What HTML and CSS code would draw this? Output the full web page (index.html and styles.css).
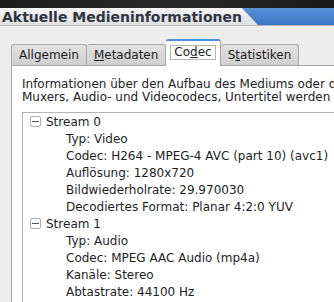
FILE: index.html
```html
<!DOCTYPE html>
<html lang="de">
<head>
    <meta charset="UTF-8">
    <title>Aktuelle Medieninformationen</title>
    <link rel="stylesheet" href="styles.css">
</head>
<body>
    <div class="desktop-strip"></div>
    <div class="titlebar">
        <span class="title">Aktuelle Medieninformationen</span>
        <div class="title-blue"></div>
    </div>
    <div class="dialog">
        <div class="tabs">
            <div class="tab">Allgemein</div>
            <div class="tab"><u>M</u>etadaten</div>
            <div class="tab active"><span class="focus">Co<u>d</u>ec</span></div>
            <div class="tab">S<u>t</u>atistiken</div>
        </div>
        <div class="panel">
            <p class="info">Informationen über den Aufbau des Mediums oder d<br>Muxers, Audio- und Videocodecs, Untertitel werden</p>
            <div class="tree">
                <div class="row"><span class="expander"></span>Stream 0</div>
                <div class="row child">Typ: Video</div>
                <div class="row child">Codec: H264 - MPEG-4 AVC (part 10) (avc1)</div>
                <div class="row child">Auflösung: 1280x720</div>
                <div class="row child">Bildwiederholrate: 29.970030</div>
                <div class="row child">Decodiertes Format: Planar 4:2:0 YUV</div>
                <div class="row"><span class="expander"></span>Stream 1</div>
                <div class="row child">Typ: Audio</div>
                <div class="row child">Codec: MPEG AAC Audio (mp4a)</div>
                <div class="row child">Kanäle: Stereo</div>
                <div class="row child">Abtastrate: 44100 Hz</div>
            </div>
        </div>
    </div>
</body>
</html>
```

FILE: styles.css
```css
* {
    margin: 0;
    padding: 0;
    box-sizing: border-box;
}

body {
    width: 334px;
    height: 302px;
    overflow: hidden;
    background: #ededed;
    font-family: 'DejaVu Sans', sans-serif;
    font-size: 12px;
    color: #1e1e1e;
}

.desktop-strip {
    height: 8px;
    background: linear-gradient(90deg, #1c1c1c, #2a2a2a 50%, #1a1a1a);
}

.titlebar {
    display: flex;
    align-items: center;
    height: 18px;
    background: linear-gradient(#f4f4f4, #dedede);
    border-bottom: 1px solid #b8b8b8;
}

.title {
    padding-left: 2px;
    font-weight: bold;
    font-size: 14px;
    color: #2f3540;
    white-space: nowrap;
}

.title-blue {
    margin-left: auto;
    width: 97px;
    height: 100%;
    background: linear-gradient(#5a90d8, #3a74c4);
    clip-path: polygon(0 0, 100% 0, 100% 100%, 16px 100%);
}

.dialog {
    padding-top: 12px;
}

.tabs {
    display: flex;
    align-items: flex-end;
    height: 27px;
    margin-left: 11px;
}

.tab {
    height: 21px;
    padding: 0 7px;
    line-height: 20px;
    background: linear-gradient(#e2e2e2, #cfcfcf);
    border: 1px solid #a6a6a6;
    border-bottom: none;
    border-left: none;
    border-radius: 3px 3px 0 0;
    white-space: nowrap;
}

.tab:first-child {
    border-left: 1px solid #a6a6a6;
}

.tab.active {
    height: 27px;
    padding: 4px 4px 0;
    background: #fff;
    border-top: 2px solid #4a8ee0;
    margin-bottom: -1px;
    position: relative;
}

.focus {
    display: block;
    padding: 0 3px;
    line-height: 13px;
    height: 15px;
    border: 1px solid #b4b4b4;
}

.panel {
    margin-left: 11px;
    height: 240px;
    background: #fff;
    border-left: 1px solid #a6a6a6;
    border-top: 1px solid #a6a6a6;
    padding: 12px 0 0 10px;
}

.info {
    line-height: 13px;
    white-space: nowrap;
}

.tree {
    margin-top: 8px;
    border: 1px solid #b4b4b4;
    border-right: none;
    height: 200px;
}

.row {
    display: flex;
    align-items: center;
    height: 17px;
    padding-left: 23px;
    white-space: nowrap;
}

.row.child {
    padding-left: 43px;
}

.expander {
    width: 11px;
    height: 11px;
    margin-left: -16px;
    margin-right: 5px;
    border: 1px solid #aeaeae;
    border-radius: 2px;
    background: linear-gradient(#555, #555) center / 7px 1px no-repeat;
}
```
